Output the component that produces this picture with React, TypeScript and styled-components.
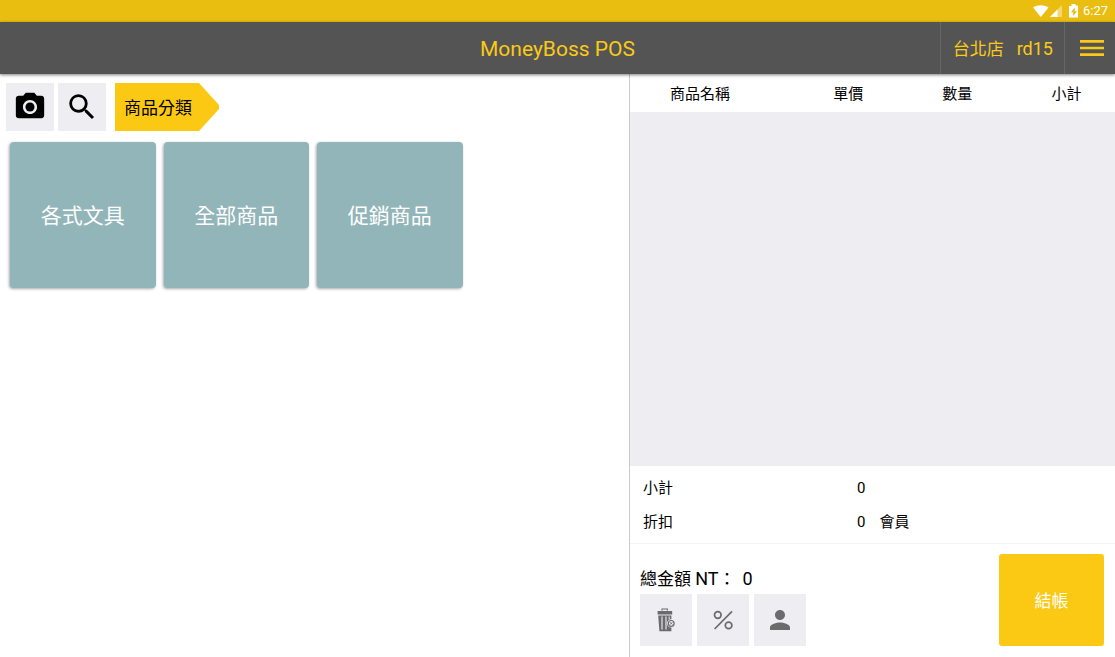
import React from "react";
import styled, { createGlobalStyle } from "styled-components";
import { MdMenu, MdPerson, MdPhotoCamera, MdSearch } from "react-icons/md";

const GlobalStyle = createGlobalStyle`
  *, *::before, *::after { box-sizing: border-box; }
  body {
    margin: 0;
    background: #fff;
    color: #000;
    font-family: Roboto, "Noto Sans CJK TC", sans-serif;
    font-size: 15px;
    line-height: 20px;
  }
  button { font: inherit; border: 0; padding: 0; cursor: pointer; color: inherit; }
`;

const Page = styled.div`
  min-height: 100vh;
  display: flex;
  flex-direction: column;
`;

const StatusBar = styled.div`
  height: 22px;
  flex: none;
  padding-right: 7px;
  display: flex;
  align-items: center;
  justify-content: flex-end;
  background: #e9be11;
  color: #fff;
  font-size: 13px;
`;

const StatusIcons = styled.svg`
  display: block;
  margin-right: 4px;
`;

const Header = styled.header`
  height: 52px;
  flex: none;
  display: grid;
  grid-template-columns: 1fr auto 1fr;
  align-items: center;
  background: #545454;
  color: #fbca16;
  box-shadow: 0 1px 3px rgba(0, 0, 0, 0.5);
  position: relative;
`;

const Title = styled.h1`
  grid-column: 2;
  margin: 0;
  padding-top: 2px;
  font-size: 21px;
  line-height: 28px;
  font-weight: 400;
`;

const HeaderActions = styled.div`
  height: 100%;
  display: flex;
  justify-content: flex-end;
`;

const HeaderButton = styled.button`
  height: 100%;
  display: flex;
  align-items: center;
  background: transparent;
  border-left: 1px solid #676767;
`;

const AccountButton = styled(HeaderButton)`
  padding: 2px 11px 0 12px;
  gap: 13px;
  font-size: 17px;
`;

const MenuButton = styled(HeaderButton)`
  padding: 0 7px 0 11px;
`;

const Latin = styled.span`
  font-size: 18px;
`;

const Main = styled.main`
  flex: 1;
  display: grid;
  grid-template-columns: 629fr 486fr;
`;

const Catalog = styled.section`
  padding: 9px 13px 11px 6px;
`;

const Toolbar = styled.div`
  display: flex;
  gap: 4px;
`;

const IconButton = styled.button<{ $size: number; $color: string }>`
  width: ${(p) => p.$size}px;
  height: ${(p) => p.$size}px;
  display: flex;
  align-items: center;
  justify-content: center;
  background: #eeedf2;
  color: ${(p) => p.$color};
`;

const Crumb = styled.button`
  height: 48px;
  margin-left: 5px;
  padding: 2px 27px 0 9px;
  background: #fbc914;
  font-size: 17px;
  clip-path: polygon(0 0, calc(100% - 20px) 0, 100% 46%, 100% 54%, calc(100% - 20px) 100%, 0 100%);
`;

const Categories = styled.div`
  margin-top: 11px;
  padding-left: 4px;
  display: grid;
  grid-template-columns: repeat(4, 1fr);
  gap: 8px;
`;

const CategoryCard = styled.button`
  aspect-ratio: 1;
  padding-top: 2px;
  border-radius: 4px;
  background: #92b5b9;
  color: #fff;
  font-size: 21px;
  line-height: 28px;
  box-shadow: -1px 1px 3px rgba(0, 0, 0, 0.35);
`;

const Order = styled.section`
  display: flex;
  flex-direction: column;
  border-left: 1px solid #cacaca;
`;

const OrderList = styled.div`
  flex: 1;
  background: #eeedf2;
`;

const OrderTable = styled.table`
  width: 100%;
  table-layout: fixed;
  border-collapse: collapse;
  background: #fff;
`;

const HeadCell = styled.th<{ $width: number; $start?: boolean }>`
  width: ${(p) => p.$width}%;
  height: 38px;
  padding: 2px 0 0 ${(p) => (p.$start ? 40 : 0)}px;
  text-align: ${(p) => (p.$start ? "left" : "center")};
  font-weight: 400;
`;

const Totals = styled.div`
  padding: 5px 13px 4px;
  border-bottom: 1px solid #f3f3f5;
`;

const TotalRow = styled.div`
  height: 34px;
  display: grid;
  grid-template-columns: 1fr 1fr;
  column-gap: 14px;
  align-items: center;
`;

const Amount = styled.div`
  display: flex;
  justify-content: space-between;
`;

const Checkout = styled.div`
  padding: 10px 11px 11px 10px;
  display: flex;
  justify-content: space-between;
`;

const CheckoutInfo = styled.div`
  display: flex;
  flex-direction: column;
  justify-content: flex-end;
  gap: 5px;
`;

const GrandTotal = styled.div`
  display: flex;
  gap: 7px;
  font-size: 17px;
`;

const Actions = styled.div`
  display: flex;
  gap: 5px;
`;

const PayButton = styled.button`
  width: 105px;
  height: 92px;
  padding-top: 2px;
  border-radius: 3px;
  background: #fbc914;
  color: #fff;
  font-size: 17px;
`;

const TrashIcon = () => (
  <svg width="18" height="24" viewBox="0 0 18 24" aria-hidden="true">
    <path d="M5 2.4V1h5.400v1.400" fill="none" stroke="currentColor" strokeWidth="1.1" />
    <path d="M.6 3h14.600v3.500H.6z" fill="currentColor" />
    <path d="M1.200 7.400h13.200v15.800H2.400z" fill="currentColor" />
    <path d="M5 8.500v13M9 8.500v13" stroke="#eeedf2" strokeWidth="1.1" />
    <path d="M12.200 8.500v3" stroke="#eeedf2" strokeWidth="1" />
    <circle cx="14.200" cy="15.400" r="4.200" fill="#eeedf2" />
    <circle cx="14.200" cy="15.400" r="2.900" fill="none" stroke="currentColor" strokeWidth="1.200" />
    <path d="M13 14.200l2.400 2.400M15.400 14.200L13 16.600" stroke="currentColor" strokeWidth=".9" />
  </svg>
);

const PercentIcon = () => (
  <svg width="20" height="20" viewBox="0 0 20 20" fill="none" stroke="currentColor" strokeWidth="1.7" aria-hidden="true">
    <path d="M1.600 19L19 1.400" />
    <circle cx="4.800" cy="5" r="3.300" />
    <circle cx="15.600" cy="15.400" r="3.300" />
  </svg>
);

const columns = [
  { label: "商品名稱", width: 35, start: true },
  { label: "單價", width: 20 },
  { label: "數量", width: 25 },
  { label: "小計", width: 20 },
];

const categories = ["各式文具", "全部商品", "促銷商品"];

export default function App() {
  return (
    <Page>
      <GlobalStyle />
      <StatusBar>
        <StatusIcons width="46" height="14" viewBox="0 0 46 14" fill="#fff" aria-hidden="true">
          <path d="M0 3.600C4.300.4 11.200.4 15.500 3.600L7.800 13z" />
          <path d="M17 13L29 1v12z" opacity=".4" />
          <path d="M17 13l7.500-7.500V13z" />
          <path
            fillRule="evenodd"
            d="M38.500 0h4v1.500H45V13.500h-9V2h2.500zM41.800 3.500L38 8.300h2.200v3.700L44 7.200h-2.200z"
          />
        </StatusIcons>
        <span>6:27</span>
      </StatusBar>
      <Header>
        <Title>MoneyBoss POS</Title>
        <HeaderActions>
          <AccountButton>
            <span>台北店</span>
            <Latin>rd15</Latin>
          </AccountButton>
          <MenuButton aria-label="選單">
            <MdMenu size={32} />
          </MenuButton>
        </HeaderActions>
      </Header>
      <Main>
        <Catalog>
          <Toolbar>
            <IconButton $size={48} $color="#000" aria-label="掃描">
              <MdPhotoCamera size={34} />
            </IconButton>
            <IconButton $size={48} $color="#000" aria-label="搜尋">
              <MdSearch size={34} />
            </IconButton>
            <Crumb>商品分類</Crumb>
          </Toolbar>
          <Categories>
            {categories.map((name) => (
              <CategoryCard key={name}>{name}</CategoryCard>
            ))}
          </Categories>
        </Catalog>
        <Order>
          <OrderList>
            <OrderTable>
              <thead>
                <tr>
                  {columns.map((c) => (
                    <HeadCell key={c.label} $width={c.width} $start={c.start} scope="col">
                      {c.label}
                    </HeadCell>
                  ))}
                </tr>
              </thead>
            </OrderTable>
          </OrderList>
          <Totals>
            <TotalRow>
              <Amount>
                <span>小計</span>
                <span>0</span>
              </Amount>
            </TotalRow>
            <TotalRow>
              <Amount>
                <span>折扣</span>
                <span>0</span>
              </Amount>
              <span>會員</span>
            </TotalRow>
          </Totals>
          <Checkout>
            <CheckoutInfo>
              <GrandTotal>
                <span>
                  總金額 <Latin>NT</Latin>：
                </span>
                <Latin>0</Latin>
              </GrandTotal>
              <Actions>
                <IconButton $size={52} $color="#6b6b6d" aria-label="清空">
                  <TrashIcon />
                </IconButton>
                <IconButton $size={52} $color="#6b6b6d" aria-label="折扣">
                  <PercentIcon />
                </IconButton>
                <IconButton $size={52} $color="#6b6b6d" aria-label="會員">
                  <MdPerson size={30} />
                </IconButton>
              </Actions>
            </CheckoutInfo>
            <PayButton>結帳</PayButton>
          </Checkout>
        </Order>
      </Main>
    </Page>
  );
}
